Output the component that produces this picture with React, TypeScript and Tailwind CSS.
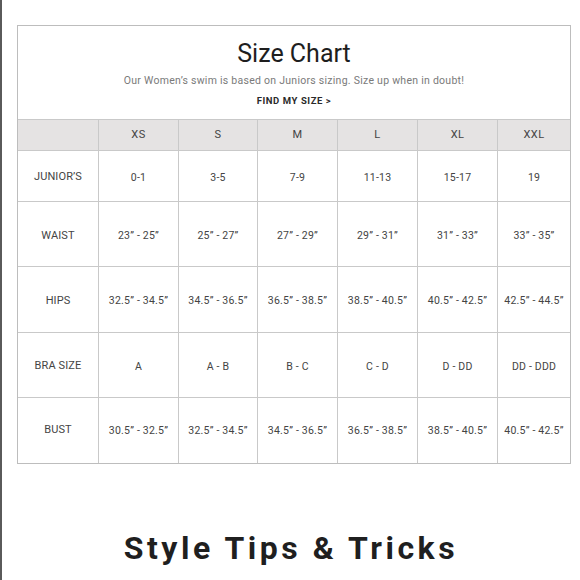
const sizes = ["XS", "S", "M", "L", "XL", "XXL"];

const rows: { label: string; values: string[]; h: string }[] = [
  { label: "JUNIOR’S", values: ["0-1", "3-5", "7-9", "11-13", "15-17", "19"], h: "h-[50px] pt-[3px]" },
  {
    label: "WAIST",
    values: ["23” - 25”", "25” - 27”", "27” - 29”", "29” - 31”", "31” - 33”", "33” - 35”"],
    h: "h-[64px] pt-[4px]",
  },
  {
    label: "HIPS",
    values: ["32.5” - 34.5”", "34.5” - 36.5”", "36.5” - 38.5”", "38.5” - 40.5”", "40.5” - 42.5”", "42.5” - 44.5”"],
    h: "h-[65px] pt-[3px]",
  },
  { label: "BRA SIZE", values: ["A", "A - B", "B - C", "C - D", "D - DD", "DD - DDD"], h: "h-[64px] pt-[3px]" },
  {
    label: "BUST",
    values: ["30.5” - 32.5”", "32.5” - 34.5”", "34.5” - 36.5”", "36.5” - 38.5”", "38.5” - 40.5”", "40.5” - 42.5”"],
    h: "h-[65px]",
  },
];

const cols = "grid grid-cols-[80px_79px_78px_79px_79px_79px_72px] gap-x-px";

export default function App() {
  return (
    <div className="h-[580px] w-[580px] overflow-hidden border-l-2 border-[#5a5a5a] bg-white font-['Roboto',sans-serif]">
      <div className="ml-[15px] mt-[25px] w-[554px] border border-[#bdbdbd] bg-[#c9c9c9]">
        {/* heading */}
        <div className="flex h-[93px] flex-col items-center bg-white">
          <h1 className="mt-[14px] text-[25px] leading-[28px] text-[#1e1e1e]">Size Chart</h1>
          <p className="mt-[6px] text-[10.5px] leading-[14px] tracking-[0.025em] text-[#7a7a7a]">
            Our Women’s swim is based on Juniors sizing. Size up when in doubt!
          </p>
          <p className="mt-[7px] text-[9.5px] font-bold leading-[12px] tracking-[0.06em] text-[#2a2a2a]">
            FIND MY SIZE &gt;
          </p>
        </div>

        {/* size header */}
        <div className={`${cols} mt-px`}>
          <div className="h-[30px] bg-[#e5e3e3]" />
          {sizes.map((s) => (
            <div
              key={s}
              className="flex h-[30px] items-center justify-center bg-[#e5e3e3] text-[11px] tracking-[0.04em] text-[#444]"
            >
              {s}
            </div>
          ))}
        </div>

        {rows.map((row) => (
          <div key={row.label} className={`${cols} mt-px`}>
            <div
              className={`flex ${row.h} items-center justify-center bg-white text-[11px] tracking-[0.01em] text-[#444]`}
            >
              {row.label}
            </div>
            {row.values.map((v, i) => (
              <div
                key={i}
                className={`flex ${row.h} items-center justify-center whitespace-nowrap bg-white text-[10.5px] tracking-[0.02em] text-[#444]`}
              >
                {v}
              </div>
            ))}
          </div>
        ))}
      </div>

      <h2 className="mt-[68px] text-center text-[32px] font-bold leading-none tracking-[0.11em] text-[#1f1f1f]">
        Style Tips &amp; Tricks
      </h2>
    </div>
  );
}
